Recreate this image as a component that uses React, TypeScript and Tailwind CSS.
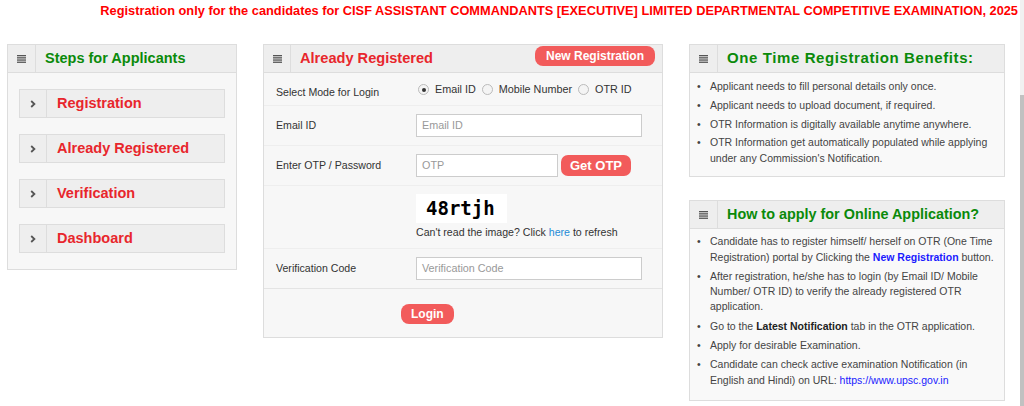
import React from "react";

const Ham = () => (
  <svg width="9" height="8" viewBox="0 0 9 8" className="block">
    <rect x="0" y="0" width="9" height="1.3" fill="#555" />
    <rect x="0" y="2.2" width="9" height="1.3" fill="#555" />
    <rect x="0" y="4.4" width="9" height="1.3" fill="#555" />
    <rect x="0" y="6.6" width="9" height="1.3" fill="#555" />
  </svg>
);

const Chev = () => (
  <svg width="6" height="8" viewBox="0 0 6 8" className="block">
    <path d="M1.2 1 L4.4 4 L1.2 7" stroke="#555" strokeWidth="1.8" fill="none" />
  </svg>
);

function Header({ title, cls, cell = 28, right }: { title: string; cls: string; cell?: number; right?: React.ReactNode }) {
  return (
    <div className="flex h-[28px] items-stretch border-b border-[#dddddd] bg-[#eeeeee]">
      <div
        className="flex shrink-0 items-center justify-center border-r border-[#dddddd]"
        style={{ width: cell }}
      >
        <Ham />
      </div>
      <div className={`flex flex-1 items-center pl-[9px] font-bold ${cls}`}>{title}</div>
      {right}
    </div>
  );
}

function Step({ label }: { label: string }) {
  return (
    <div className="flex h-[29px] border border-[#dddddd] bg-[#eeeeee]">
      <div className="flex w-[27px] shrink-0 items-center justify-center border-r border-[#dddddd]">
        <Chev />
      </div>
      <div className="flex items-center pl-[10px] text-[14.5px] font-bold text-[#e8262c]">{label}</div>
    </div>
  );
}

const Input = ({ ph, w }: { ph: string; w: string }) => (
  <div className={`flex h-[23px] items-center border border-[#cccccc] bg-white pl-[5px] text-[10.8px] text-[#999999] ${w}`}>
    {ph}
  </div>
);

const Radio = ({ on }: { on?: boolean }) => (
  <span className="flex h-[11px] w-[11px] items-center justify-center rounded-full border border-[#bbbbbb] bg-[#f4f4f4]">
    {on && <span className="h-[4px] w-[4px] rounded-full bg-[#333]" />}
  </span>
);

export default function App() {
  return (
    <div className="flex h-[406px] w-[1024px] overflow-hidden bg-white font-['Liberation_Sans',Arial,sans-serif] text-[#333333]">
      <div className="w-[1020px]">
        <div className="flex h-[21px] items-center justify-end pr-[2px] text-[12.8px] font-bold text-[#ff0000]">
          Registration only for the candidates for CISF ASSISTANT COMMANDANTS [EXECUTIVE] LIMITED DEPARTMENTAL COMPETITIVE EXAMINATION, 2025
        </div>
        <div className="mt-[23px] flex items-start pl-[7px]">
          {/* Left */}
          <div className="w-[230px] border border-[#dddddd] bg-[#f7f7f7]">
            <Header title="Steps for Applicants" cls="text-[14.5px] text-[#0a8a0a]" />
            <div className="flex flex-col gap-[16px] px-[11px] pb-[16px] pt-[16px]">
              <Step label="Registration" />
              <Step label="Already Registered" />
              <Step label="Verification" />
              <Step label="Dashboard" />
            </div>
          </div>

          {/* Middle */}
          <div className="ml-[26px] w-[400px] border border-[#dddddd] bg-[#f7f7f7]">
            <Header
              title="Already Registered"
              cls="text-[14.6px] text-[#e8262c]"
              cell={27}
              right={
                <div className="flex items-start pr-[7px] pt-[1px]">
                  <div className="flex h-[20px] items-center rounded-[8px] bg-[#f25b5b] px-[11px] text-[12px] font-bold text-white">
                    New Registration
                  </div>
                </div>
              }
            />
            <div className="text-[10.6px] text-[#333333]">
              <div className="flex h-[33px] items-center border-b border-[#eeeeee] pl-[12px]">
                <div className="w-[142px] pt-[7px]">Select Mode for Login</div>
                <div className="flex items-center gap-[6px] pt-[1px] text-[10.8px]">
                  <Radio on />
                  <span>Email ID</span>
                  <Radio />
                  <span>Mobile Number</span>
                  <Radio />
                  <span>OTR ID</span>
                </div>
              </div>
              <div className="flex h-[40px] items-center border-b border-[#eeeeee] pl-[12px]">
                <div className="w-[140px]">Email ID</div>
                <Input ph="Email ID" w="w-[226px]" />
              </div>
              <div className="flex h-[40px] items-center border-b border-[#eeeeee] pl-[12px]">
                <div className="w-[140px]">Enter OTP / Password</div>
                <Input ph="OTP" w="w-[142px]" />
                <div className="ml-[3px] flex h-[21px] items-center rounded-[7px] bg-[#f25b5b] px-[9px] text-[13px] font-bold text-white">
                  Get OTP
                </div>
              </div>
              <div className="flex h-[63px] flex-col justify-center border-b border-[#eeeeee] pl-[152px]">
                <div className="mt-[1px] flex h-[29px] w-[91px] items-center bg-white pl-[10px] font-['DejaVu_Sans_Mono',monospace] text-[19px] font-bold leading-none text-black">
                  48rtjh
                </div>
                <div className="mt-[2px] text-[10.6px]">
                  Can't read the image? Click <span className="text-[#1e8bd6]">here</span> to refresh
                </div>
              </div>
              <div className="flex h-[40px] items-center border-b border-[#e4e4e4] pl-[12px]">
                <div className="w-[140px]">Verification Code</div>
                <Input ph="Verification Code" w="w-[226px]" />
              </div>
              <div className="flex h-[48px] items-start pl-[137px] pt-[15px]">
                <div className="flex h-[20px] items-center rounded-[8px] bg-[#f25b5b] px-[10px] text-[12px] font-bold text-white">
                  Login
                </div>
              </div>
            </div>
          </div>

          {/* Right */}
          <div className="ml-[26px] flex w-[316px] flex-col gap-[23px]">
            <div className="border border-[#dddddd] bg-[#f9f9f9]">
              <Header title="One Time Registration Benefits:" cls="text-[15px] tracking-[0.6px] text-[#0a8a0a]" />
              <ul className="px-[7px] pb-[10px] pt-[6px] text-[10.5px] leading-[15.4px] text-[#444444]">
                {[
                  "Applicant needs to fill personal details only once.",
                  "Applicant needs to upload document, if required.",
                  "OTR Information is digitally available anytime anywhere.",
                  "OTR Information get automatically populated while applying under any Commission's Notification.",
                ].map((t) => (
                  <li key={t} className="mb-[3.4px] flex last:mb-0">
                    <span className="w-[13px] shrink-0">•</span>
                    <span>{t}</span>
                  </li>
                ))}
              </ul>
            </div>
            <div className="border border-[#dddddd] bg-[#f9f9f9]">
              <Header title="How to apply for Online Application?" cls="text-[14.4px] text-[#0a8a0a]" />
              <ul className="px-[7px] pb-[12px] pt-[5px] text-[10.5px] leading-[15.3px] text-[#444444]">
                <li className="mb-[4px] flex">
                  <span className="w-[13px] shrink-0">•</span>
                  <span>
                    Candidate has to register himself/ herself on OTR (One Time Registration) portal by Clicking the{" "}
                    <b className="text-[#1a1aff]">New Registration</b> button.
                  </span>
                </li>
                <li className="mb-[4px] flex">
                  <span className="w-[13px] shrink-0">•</span>
                  <span>After registration, he/she has to login (by Email ID/ Mobile Number/ OTR ID) to verify the already registered OTR application.</span>
                </li>
                <li className="mb-[4px] flex">
                  <span className="w-[13px] shrink-0">•</span>
                  <span>
                    Go to the <b className="text-[#222]">Latest Notification</b> tab in the OTR application.
                  </span>
                </li>
                <li className="mb-[4px] flex">
                  <span className="w-[13px] shrink-0">•</span>
                  <span>Apply for desirable Examination.</span>
                </li>
                <li className="flex">
                  <span className="w-[13px] shrink-0">•</span>
                  <span>
                    Candidate can check active examination Notification (in English and Hindi) on URL:{" "}
                    <span className="text-[#1a1aff]">https://www.upsc.gov.in</span>
                  </span>
                </li>
              </ul>
            </div>
          </div>
        </div>
      </div>
      <div className="flex w-[4px] flex-col">
        <div className="h-[95px] bg-[#f1f1f1]" />
        <div className="flex-1 bg-[#c1c1c1]" />
      </div>
    </div>
  );
}
